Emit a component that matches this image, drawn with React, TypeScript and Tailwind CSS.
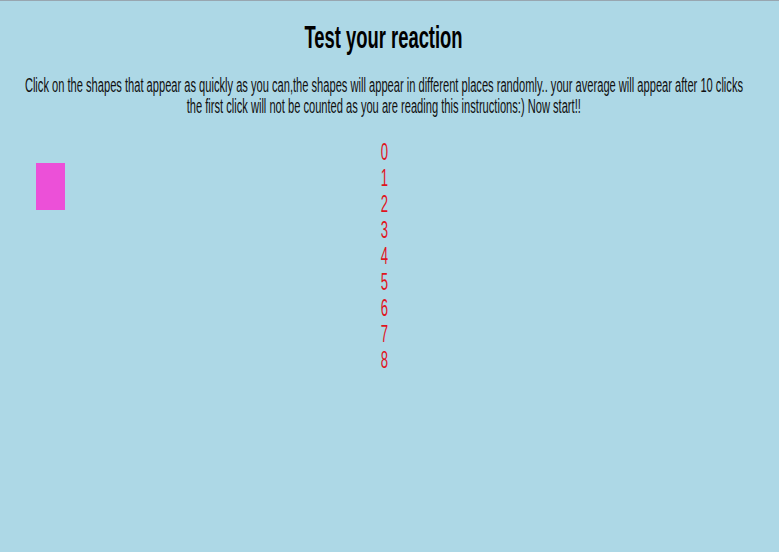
import React from 'react';

const App = () => {
  const numbers = [0, 1, 2, 3, 4, 5, 6, 7, 8];

  return (
    <div className="relative min-h-[552px] overflow-hidden border-t border-[#98a6b0] bg-[#add8e6] font-['Liberation_Sans',Arial,sans-serif]">
      <div className="flex w-[768px] flex-col items-center">
        <h1 className="mt-[18px] scale-x-[0.575] whitespace-nowrap text-[32px] font-bold leading-[37px] text-black">
          Test your reaction
        </h1>

        <div className="mt-[19px] flex flex-col items-center text-[19.5px] leading-[21px] text-[#111]">
          <span className="scale-x-[0.57] whitespace-nowrap">
            Click on the shapes that appear as quickly as you can,the shapes will appear in different places randomly.. your average will appear after 10 clicks
          </span>
          <span className="scale-x-[0.57] whitespace-nowrap">
            the first click will not be counted as you are reading this instructions:) Now start!!
          </span>
        </div>

        <div className="mt-[22px] flex flex-col items-center text-[23px] leading-[26px] text-[#e0141e]">
          {numbers.map((n) => (
            <span key={n} className="scale-x-[0.57]">
              {n}
            </span>
          ))}
        </div>
      </div>

      {/* the shape that pops up somewhere on the page */}
      <div className="absolute left-[36px] top-[162px] h-[47px] w-[29px] bg-[#ec50d8]" />
    </div>
  );
};

export default App;
